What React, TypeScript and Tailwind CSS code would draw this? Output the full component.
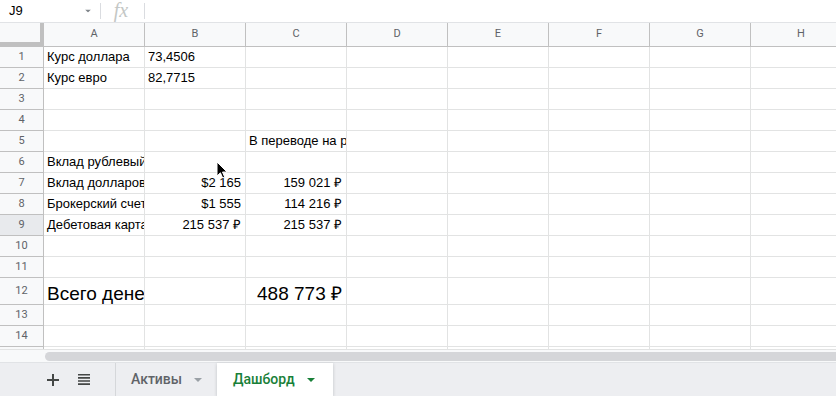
import React from "react";

const cols = ["A", "B", "C", "D", "E", "F", "G", "H"];

type Cell = { text: string; align?: "left" | "right" };
type Row = { n: number; big?: boolean; cells: Record<string, Cell> };

const rows: Row[] = [
  { n: 1, cells: { A: { text: "Курс доллара" }, B: { text: "73,4506" } } },
  { n: 2, cells: { A: { text: "Курс евро" }, B: { text: "82,7715" } } },
  { n: 3, cells: {} },
  { n: 4, cells: {} },
  { n: 5, cells: { C: { text: "В переводе на рубли" } } },
  { n: 6, cells: { A: { text: "Вклад рублевый" } } },
  {
    n: 7,
    cells: {
      A: { text: "Вклад долларовый" },
      B: { text: "$2 165", align: "right" },
      C: { text: "159 021 ₽", align: "right" },
    },
  },
  {
    n: 8,
    cells: {
      A: { text: "Брокерский счет" },
      B: { text: "$1 555", align: "right" },
      C: { text: "114 216 ₽", align: "right" },
    },
  },
  {
    n: 9,
    cells: {
      A: { text: "Дебетовая карта" },
      B: { text: "215 537 ₽", align: "right" },
      C: { text: "215 537 ₽", align: "right" },
    },
  },
  { n: 10, cells: {} },
  { n: 11, cells: {} },
  {
    n: 12,
    big: true,
    cells: {
      A: { text: "Всего денег" },
      C: { text: "488 773 ₽", align: "right" },
    },
  },
  { n: 13, cells: {} },
  { n: 14, cells: {} },
];

function Caret({ className = "" }: { className?: string }) {
  return (
    <svg width="8" height="4" viewBox="0 0 8 4" className={className}>
      <path d="M0 0h8L4 4z" fill="currentColor" />
    </svg>
  );
}

export default function App() {
  return (
    <div
      className="relative w-[836px] h-[396px] overflow-hidden bg-white flex flex-col text-black"
      style={{ fontFamily: "'Liberation Sans', Arial, sans-serif" }}
    >
      {/* Formula bar */}
      <div className="h-[23px] shrink-0 flex border-b border-[#e1e3e6]">
        <div className="w-[100px] flex items-center justify-between pl-[9px] pr-[8px] text-[13px]">
          <span>J9</span>
          <Caret className="text-[#80868b] scale-75" />
        </div>
        <div className="w-px my-[3px] bg-[#dadce0]" />
        <div className="w-[43px] flex items-center justify-center">
          <span
            className="text-[#c4c7c5] text-[20px] italic leading-none -mt-[3px] -ml-[3px]"
            style={{ fontFamily: "'Liberation Serif', serif" }}
          >
            fx
          </span>
        </div>
        <div className="w-px my-[3px] bg-[#dadce0]" />
        <div className="flex-1" />
      </div>

      {/* Column header */}
      <div className="h-[24px] shrink-0 flex bg-[#f8f9fa] border-b border-[#c0c0c0]">
        <div className="w-[44px] shrink-0 relative">
          <div className="absolute right-0 top-0 bottom-0 w-[4px] bg-[#c0c0c0]" />
          <div className="absolute left-0 right-0 bottom-0 h-[4px] bg-[#c0c0c0]" />
        </div>
        {cols.map((c) => (
          <div
            key={c}
            className="w-[101px] shrink-0 border-r border-[#c0c0c0] flex items-center justify-center text-[11px] text-[#5f6368]"
            style={{ fontFamily: "Roboto, Arial, sans-serif" }}
          >
            {c}
          </div>
        ))}
      </div>

      {/* Rows */}
      {rows.map((r) => (
        <div
          key={r.n}
          className={`shrink-0 flex ${r.big ? "h-[27px]" : "h-[21px]"}`}
        >
          <div
            className={`w-[44px] shrink-0 border-r border-b border-[#c0c0c0] flex items-center justify-center text-[11px] text-[#5f6368] ${
              r.n === 9 ? "bg-[#e8eaed]" : "bg-[#f8f9fa]"
            }`}
            style={{ fontFamily: "Roboto, Arial, sans-serif" }}
          >
            {r.n}
          </div>
          {cols.map((c) => {
            const cell = r.cells[c];
            return (
              <div
                key={c}
                className={`w-[101px] shrink-0 border-r border-b border-[#e2e3e3] overflow-hidden whitespace-nowrap flex items-end ${
                  cell?.align === "right" ? "justify-end pr-[4px]" : "pl-[3px]"
                } ${r.big ? "text-[19px] leading-[20px] pb-0" : "text-[13px] pb-[1px]"}`}
              >
                {cell?.text}
              </div>
            );
          })}
        </div>
      ))}

      {/* Partial row */}
      <div className="h-[3px] shrink-0 flex border-b border-[#e2e3e3]">
        <div className="w-[44px] shrink-0 bg-[#f8f9fa] border-r border-[#c0c0c0]" />
        {cols.map((c) => (
          <div key={c} className="w-[101px] shrink-0 border-r border-[#e2e3e3]" />
        ))}
      </div>

      {/* Horizontal scrollbar */}
      <div className="h-[12px] shrink-0 flex items-center bg-[#f8f9fa]">
        <div className="w-[45px] shrink-0" />
        <div className="flex-1 h-[9px] rounded-l-full bg-[#d5d6d9]" />
      </div>

      {/* Sheet tabs */}
      <div
        className="flex-1 flex bg-[#edeef1] border-t border-[#e1e3e6]"
        style={{ fontFamily: "Roboto, Arial, sans-serif" }}
      >
        <div className="w-[115px] shrink-0 flex items-center pl-[47px] gap-[19px] text-[#444746]">
          <svg width="12" height="12" viewBox="0 0 12 12">
            <path d="M5 0h2v5h5v2H7v5H5V7H0V5h5z" fill="currentColor" />
          </svg>
          <svg width="12" height="11" viewBox="0 0 12 11">
            <path d="M0 0h12v1.6H0zM0 3.1h12v1.6H0zM0 6.2h12v1.6H0zM0 9.3h12v1.6H0z" fill="currentColor" />
          </svg>
        </div>
        <div className="w-[102px] shrink-0 border-l border-[#d5d7da] flex items-center pl-[15px] gap-[12px] text-[#5f6368]">
          <span className="text-[14px] font-medium">Активы</span>
          <Caret className="text-[#9aa0a6]" />
        </div>
        <div className="w-[116px] shrink-0 bg-white flex items-center pl-[16px] gap-[12px] text-[#188038] shadow-[0_1px_3px_rgba(60,64,67,0.25)]">
          <span className="text-[14px] font-medium">Дашборд</span>
          <Caret />
        </div>
        <div className="flex-1" />
      </div>

      {/* Mouse cursor */}
      <svg
        className="absolute left-[216px] top-[161px]"
        width="12"
        height="18"
        viewBox="0 0 12 18"
      >
        <path
          d="M1 1v14l3.4-3.2 2.3 5.2 2-0.9-2.2-5.1H11z"
          fill="#000"
          stroke="#fff"
          strokeWidth="1"
          strokeLinejoin="round"
        />
      </svg>
    </div>
  );
}
